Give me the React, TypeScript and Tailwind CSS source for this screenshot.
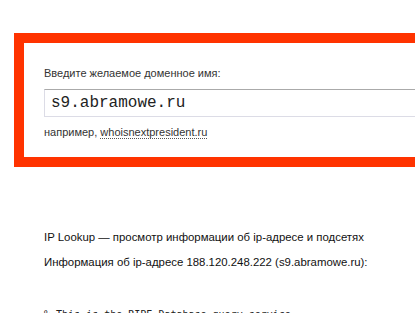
import React from 'react'

const App: React.FC = () => {
  return (
    <div className="w-[415px] h-[313px] overflow-hidden bg-white text-[#222] font-['Liberation_Sans',sans-serif]">
      <div className="h-[33px]" />
      <div className="ml-[14px] w-[460px] h-[134px] border-[10px] border-[#ff3300] bg-white pl-[20px] pt-[23px]">
        <div className="text-[11px] leading-[14px] text-[#333]">Введите желаемое доменное имя:</div>
        <div className="mt-[9px] h-[28px] border border-[#dcdce6] border-t-[#aaaaaa] bg-white pl-[6px] flex items-center">
          <span className="font-['Liberation_Mono',monospace] text-[16px] text-[#222]">s9.abramowe.ru</span>
        </div>
        <div className="mt-[8px] text-[11px] leading-[14px] text-[#333]">
          например,{' '}
          <span className="border-b border-dotted border-[#555]">whoisnextpresident.ru</span>
        </div>
      </div>
      <div className="pl-[44px] pt-[62px]">
        <div className="text-[11.4px] leading-[16px] text-[#111] whitespace-nowrap">
          IP Lookup — просмотр информации об ip-адресе и подсетях
        </div>
        <div className="mt-[9px] text-[11.4px] leading-[16px] text-[#111] whitespace-nowrap">
          Информация об ip-адресе 188.120.248.222 (s9.abramowe.ru):
        </div>
        <pre className="mt-[38px] font-['DejaVu_Sans_Mono',monospace] text-[10px] leading-[14px] text-[#222]">% This is the RIPE Database query service</pre>
      </div>
    </div>
  )
}

export default App
